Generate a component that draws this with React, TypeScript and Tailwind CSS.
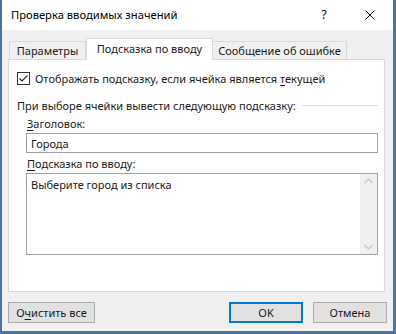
import React from "react";

const U = ({ children }: { children: React.ReactNode }) => (
  <span className="underline underline-offset-2 decoration-1">{children}</span>
);

export default function App() {
  return (
    <div className="w-[396px] h-[334px] flex flex-col bg-[#f0f0f0] border-l-2 border-r-[3px] border-b-[3px] border-[#4a75a0] font-['Noto_Sans',sans-serif] text-[11px] text-[#1a1a1a] leading-none">
      {/* Title bar */}
      <div className="h-[30px] bg-white flex items-stretch shrink-0">
        <div className="flex items-center pl-[9px] text-[11.2px] text-black">Проверка вводимых значений</div>
        <div className="ml-auto flex">
          <div className="w-[46px] flex items-center justify-center text-[12px] text-black">?</div>
          <div className="w-[46px] flex items-center justify-center">
            <svg width="10" height="10" viewBox="0 0 10 10">
              <path d="M0.5 0.5 L9.5 9.5 M9.5 0.5 L0.5 9.5" stroke="#111" strokeWidth="1" />
            </svg>
          </div>
        </div>
      </div>

      {/* Body */}
      <div className="flex-1 flex flex-col px-[6px] pt-[8px]">
        {/* Tabs */}
        <div className="flex items-end pl-[1px] relative z-10">
          <div className="w-[77px] h-[18px] border border-b-0 border-[#d9d9d9] bg-[#f0f0f0] flex items-center justify-center">
            Параметры
          </div>
          <div className="w-[127px] h-[22px] -mb-px border border-b-0 border-[#d9d9d9] bg-white flex items-center justify-center pb-[2px]">
            Подсказка по вводу
          </div>
          <div className="w-[134px] h-[18px] border border-b-0 border-l-0 border-[#d9d9d9] bg-[#f0f0f0] flex items-center justify-center whitespace-nowrap">
            Сообщение об ошибке
          </div>
        </div>

        {/* Panel */}
        <div className="w-[377px] h-[233px] border border-[#d9d9d9] bg-white flex flex-col">
          <div className="mt-[12px] ml-[8px] flex items-center h-[13px]">
            <div className="w-[13px] h-[13px] border border-[#333] bg-white flex items-center justify-center">
              <svg width="11" height="11" viewBox="0 0 11 11">
                <path d="M1.5 5.5 L4 8 L9.5 2.5" stroke="#222" strokeWidth="1.1" fill="none" />
              </svg>
            </div>
            <span className="ml-[5px]">
              Отображать подсказку, если ячейка является <U>т</U>екущей
            </span>
          </div>

          <div className="mt-[12px] ml-[8px] mr-[6px] h-[16px] flex items-center">
            <span className="whitespace-nowrap">При выборе ячейки вывести следующую подсказку:</span>
            <div className="flex-1 h-px bg-[#dcdcdc] ml-[6px]" />
          </div>

          <div className="mt-[2px] ml-[18px] h-[16px] flex items-center">
            <span><U>З</U>аголовок:</span>
          </div>
          <div className="mt-[2px] ml-[17px] w-[352px] h-[20px] border border-[#a0a0a0] flex items-center pl-[4px]">
            Города
          </div>

          <div className="mt-[2px] ml-[18px] h-[16px] flex items-center">
            <span><U>П</U>одсказка по вводу:</span>
          </div>
          <div className="mt-[2px] ml-[17px] w-[352px] h-[82px] border border-[#a0a0a0] flex">
            <div className="flex-1 pl-[4px] pt-[5px]">Выберите город из списка</div>
            <div className="w-[17px] bg-[#f0f0f0] flex flex-col justify-between items-center py-[4px]">
              <svg width="9" height="6" viewBox="0 0 9 6">
                <path d="M0.5 5 L4.5 1 L8.5 5" stroke="#c6c6c6" strokeWidth="1.2" fill="none" />
              </svg>
              <svg width="9" height="6" viewBox="0 0 9 6">
                <path d="M0.5 1 L4.5 5 L8.5 1" stroke="#c6c6c6" strokeWidth="1.2" fill="none" />
              </svg>
            </div>
          </div>
        </div>

        {/* Buttons */}
        <div className="mt-[10px] flex items-center">
          <div className="w-[87px] h-[21px] border border-[#adadad] bg-[#e1e1e1] flex items-center justify-center">
            <span>О<U>ч</U>истить все</span>
          </div>
          <div className="ml-auto w-[74px] h-[21px] border-2 border-[#0078d7] bg-[#e1e1e1] flex items-center justify-center">
            OK
          </div>
          <div className="ml-[10px] w-[74px] h-[21px] border border-[#adadad] bg-[#e1e1e1] flex items-center justify-center">
            Отмена
          </div>
        </div>
      </div>
    </div>
  );
}
